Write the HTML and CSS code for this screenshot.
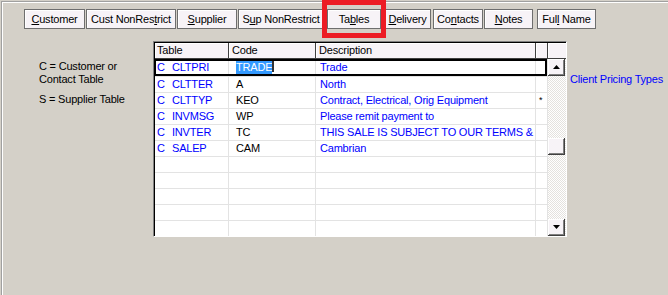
FILE: index.html
```html
<!DOCTYPE html>
<html>
<head>
<meta charset="utf-8">
<link rel="stylesheet" href="styles.css">
</head>
<body>
<div class="frame">
  <div class="toolbar">
    <button class="btn b-cust"><u>C</u>ustomer</button>
    <button class="btn b-custnr">Cust NonRes<u>t</u>rict</button>
    <button class="btn b-sup"><u>S</u>upplier</button>
    <button class="btn b-supnr">S<u>u</u>p NonRestrict</button>
    <button class="btn b-tables">Ta<u>b</u>les</button>
    <button class="btn b-del"><u>D</u>elivery</button>
    <button class="btn b-con">Co<u>n</u>tacts</button>
    <button class="btn b-notes"><u>N</u>otes</button>
    <button class="btn b-full">Ful<u>l</u> Name</button>
  </div>
  <div class="main">
    <div class="legend">
      <p>C = Customer or<br>Contact Table</p>
      <p>S = Supplier Table</p>
    </div>
    <div class="grid">
      <div class="grid-inner">
        <div class="hdr">
          <div class="hc c1">Table</div>
          <div class="hc c2">Code</div>
          <div class="hc c3">Description</div>
          <div class="hc c4"></div>
          <div class="hc c5"></div>
        </div>
        <div class="body">
          <div class="rows">
            <div class="row first">
              <div class="cell c1 blue"><span class="t">C</span>CLTPRI</div>
              <div class="cell c2"><span class="hl">TRADE</span><span class="caret"></span></div>
              <div class="cell c3 blue">Trade</div>
              <div class="cell c4"></div>
            </div>
            <div class="row">
              <div class="cell c1 blue"><span class="t">C</span>CLTTER</div>
              <div class="cell c2">A</div>
              <div class="cell c3 blue">North</div>
              <div class="cell c4"></div>
            </div>
            <div class="row">
              <div class="cell c1 blue"><span class="t">C</span>CLTTYP</div>
              <div class="cell c2">KEO</div>
              <div class="cell c3 blue">Contract, Electrical, Orig Equipment</div>
              <div class="cell c4 star">*</div>
            </div>
            <div class="row">
              <div class="cell c1 blue"><span class="t">C</span>INVMSG</div>
              <div class="cell c2">WP</div>
              <div class="cell c3 blue">Please remit payment to</div>
              <div class="cell c4"></div>
            </div>
            <div class="row">
              <div class="cell c1 blue"><span class="t">C</span>INVTER</div>
              <div class="cell c2">TC</div>
              <div class="cell c3 blue">THIS SALE IS SUBJECT TO OUR TERMS &amp;</div>
              <div class="cell c4"></div>
            </div>
            <div class="row">
              <div class="cell c1 blue"><span class="t">C</span>SALEP</div>
              <div class="cell c2">CAM</div>
              <div class="cell c3 blue">Cambrian</div>
              <div class="cell c4"></div>
            </div>
            <div class="row"><div class="cell c1"></div><div class="cell c2"></div><div class="cell c3"></div><div class="cell c4"></div></div>
            <div class="row"><div class="cell c1"></div><div class="cell c2"></div><div class="cell c3"></div><div class="cell c4"></div></div>
            <div class="row"><div class="cell c1"></div><div class="cell c2"></div><div class="cell c3"></div><div class="cell c4"></div></div>
            <div class="row"><div class="cell c1"></div><div class="cell c2"></div><div class="cell c3"></div><div class="cell c4"></div></div>
            <div class="row"><div class="cell c1"></div><div class="cell c2"></div><div class="cell c3"></div><div class="cell c4"></div></div>
          </div>
          <div class="vscroll">
            <div class="sbtn"><svg width="7" height="4" viewBox="0 0 7 4"><path d="M3.5 0 L7 4 L0 4 Z" fill="#000"/></svg></div>
            <div class="sbtn thumb"></div>
            <div class="sbtn down"><svg width="7" height="4" viewBox="0 0 7 4"><path d="M0 0 L7 0 L3.5 4 Z" fill="#000"/></svg></div>
          </div>
        </div>
        <div class="sel-outline"></div>
      </div>
    </div>
    <div class="note">Client Pricing Types</div>
  </div>
  <div class="callout"></div>
</div>
</body>
</html>
```

FILE: styles.css
```css
html, body {
  margin: 0;
  padding: 0;
}
body {
  width: 668px;
  height: 295px;
  overflow: hidden;
  background: #d4d0c8;
  font-family: "Liberation Sans", Arial, sans-serif;
  font-size: 11px;
  letter-spacing: -0.2px;
  color: #000;
}
.frame {
  position: relative;
  margin: 1px 0 0 1px;
  height: 294px;
  border-top: 1px solid #a0a0a0;
  border-left: 1px solid #a0a0a0;
  box-shadow: inset 1px 1px 0 #fff;
  box-sizing: border-box;
}
.toolbar {
  display: flex;
  padding: 7px 0 0 22px;
  height: 20px;
}
.btn {
  height: 20px;
  padding: 0;
  margin: 0 2px 0 0;
  background: #f7f3f7;
  border: 1px solid #6e6e6e;
  box-shadow: inset 1px 1px 0 #fff;
  font-family: "Liberation Sans", Arial, sans-serif;
  font-size: 11px;
  letter-spacing: -0.2px;
  color: #000;
  text-align: center;
  line-height: 17px;
  white-space: nowrap;
}
.btn u { text-decoration: underline; text-underline-offset: 1px; }
.b-cust { width: 61px; margin-right: 1px; }
.b-custnr { width: 90px; margin-right: 1px; }
.b-sup { width: 60px; margin-right: 1px; }
.b-supnr { width: 86px; margin-right: 3px; }
.b-tables { width: 54px; margin-right: 3px; }
.b-del { width: 47px; margin-right: 2px; }
.b-con { width: 50px; margin-right: 1px; }
.b-notes { width: 49px; margin-right: 4px; }
.b-full { width: 59px; }

.main {
  display: flex;
  align-items: flex-start;
  margin-top: 12px;
}
.legend {
  width: 114px;
  padding: 19px 0 0 37px;
}
.legend p {
  margin: 0 0 7px 0;
  line-height: 13px;
}
.grid {
  width: 414px;
  height: 196px;
  box-sizing: border-box;
  border: 1px solid;
  border-color: #808080 #fff #fff #808080;
}
.grid-inner {
  position: relative;
  height: 100%;
  box-sizing: border-box;
  border-top: 1px solid #000;
  border-left: 1px solid #000;
  background: #fff;
  overflow: hidden;
}
.hdr {
  display: flex;
  height: 16px;
}
.hc {
  box-sizing: border-box;
  height: 16px;
  background: #f7f3f7;
  border-right: 1px solid #404040;
  border-bottom: 1px solid #404040;
  box-shadow: inset 1px 1px 0 #fff;
  line-height: 15px;
  padding-left: 2px;
}
.c1 { width: 74px; }
.c2 { width: 87px; }
.c3 { width: 220px; }
.c4 { width: 12px; }
.c5 { width: 18px; padding: 0; border-right: 0; }
.hdr .c2, .hdr .c3 { padding-left: 3px; }

.body {
  display: flex;
}
.rows {
  width: 393px;
}
.row {
  display: flex;
  height: 16px;
}
.row.first {
  height: 18px;
}
.cell {
  box-sizing: border-box;
  height: 100%;
  border-right: 1px solid #e3e3e3;
  border-bottom: 1px solid #e3e3e3;
  line-height: 15px;
  white-space: nowrap;
  overflow: hidden;
}
.row.first .cell { line-height: 17px; }
.cell.c1 { padding-left: 2px; }
.cell.c2 { padding-left: 7px; }
.cell.c3 { padding-left: 4px; }
.cell.c4 { padding-left: 3px; font-size: 9px; }
.blue { color: #0000ff; }
.t { display: inline-block; width: 15px; }
.hl {
  background: #3399ff;
  color: #fff;
  padding: 1px 0;
}
.caret {
  display: inline-block;
  width: 2px;
  height: 11px;
  background: #333;
  vertical-align: -1px;
}
.vscroll {
  width: 18px;
  height: 177px;
  display: flex;
  flex-direction: column;
  background-color: #f4f3f1;
  background-image: repeating-conic-gradient(#e4e2de 0 25%, #fff 0 50%);
  background-size: 2px 2px;
}
.sbtn {
  box-sizing: border-box;
  width: 17px;
  height: 17px;
  flex: none;
  background: #f7f3f7;
  border-right: 1px solid #404040;
  border-bottom: 1px solid #404040;
  box-shadow: inset 1px 1px 0 #fff, inset -1px -1px 0 #808080;
  display: flex;
  align-items: center;
  justify-content: center;
}
.sbtn.thumb { margin-top: 62px; }
.sbtn.down { margin-top: auto; }
.sel-outline {
  position: absolute;
  left: -1px;
  top: 16px;
  width: 393px;
  height: 17px;
  box-sizing: border-box;
  border: 2px solid #000;
}
.note {
  color: #0000ff;
  margin: 32px 0 0 3px;
  line-height: 13px;
  white-space: nowrap;
}
.callout {
  position: absolute;
  left: 320px;
  top: -2px;
  width: 64px;
  height: 38px;
  box-sizing: border-box;
  border: 5px solid #ec1c24;
}
```
